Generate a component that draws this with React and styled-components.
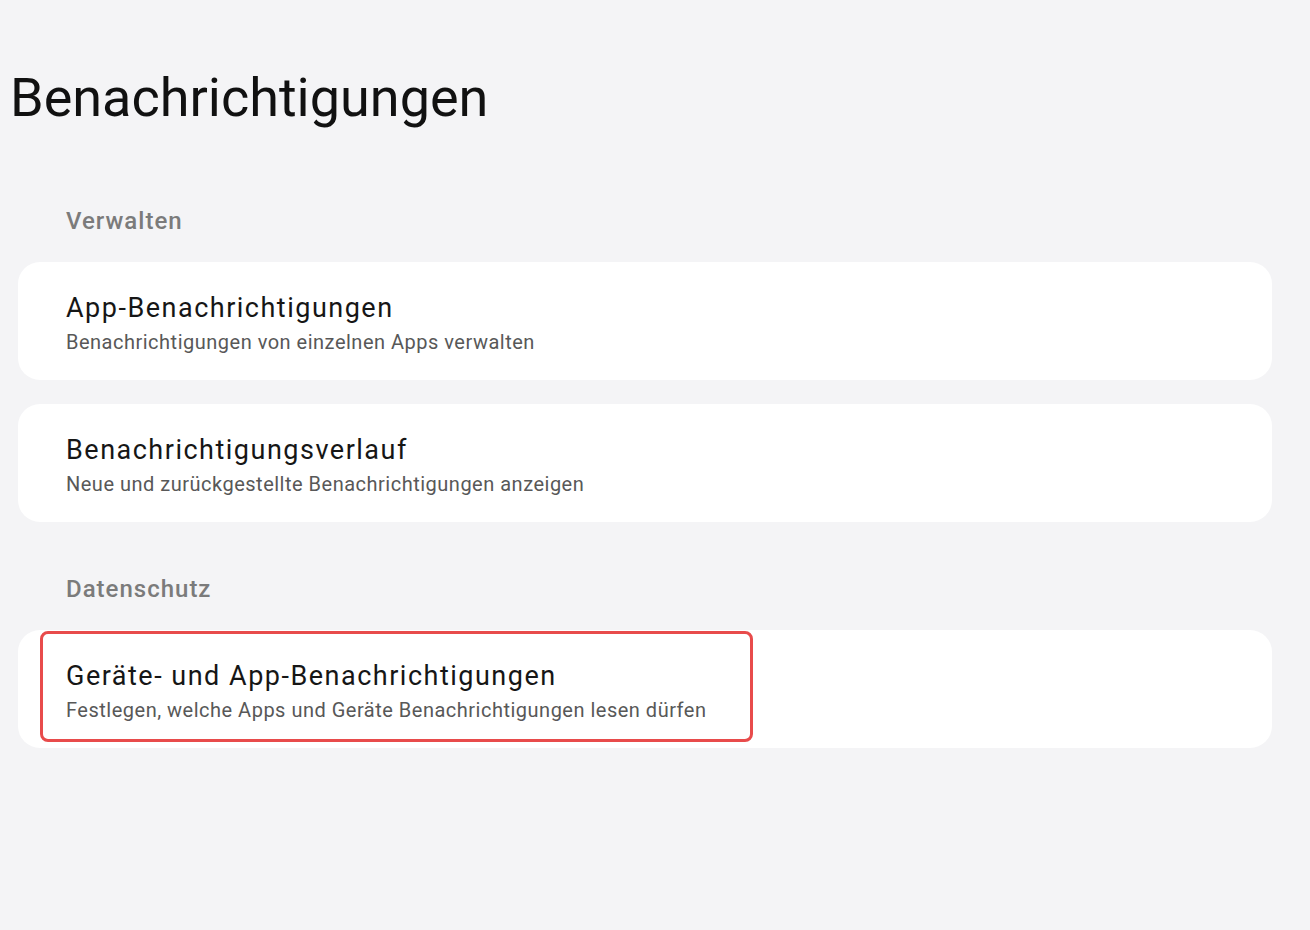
import React from "react"
import styled, { createGlobalStyle } from "styled-components"

const GlobalStyle = createGlobalStyle`
  html, body {
    margin: 0;
    padding: 0;
    background: #f4f4f6;
  }
  body {
    font-family: Roboto, "Noto Sans", "Liberation Sans", sans-serif;
    color: #111;
  }
`

const Page = styled.div`
  width: 1310px;
  height: 930px;
  background: #f4f4f6;
  padding: 66px 38px 0 18px;
  box-sizing: border-box;
`

const Title = styled.h1`
  margin: 0 0 0 -8px;
  font-size: 54px;
  font-weight: 400;
  line-height: 64px;
  color: #111;
`

const SectionHeader = styled.div`
  margin: ${({ first }) => (first ? "77px" : "53px")} 0 27px 48px;
  font-size: 24px;
  font-weight: 500;
  letter-spacing: 1px;
  line-height: 28px;
  color: #7b7b7b;
`

const List = styled.div`
  display: flex;
  flex-direction: column;
  gap: 24px;
`

const Card = styled.div`
  position: relative;
  height: 118px;
  box-sizing: border-box;
  padding: 30px 48px 0;
  background: #fff;
  border-radius: 22px;
  display: flex;
  flex-direction: column;
`

const ItemTitle = styled.div`
  font-size: 27px;
  letter-spacing: 1.5px;
  line-height: 32px;
  color: #161616;
`

const ItemSub = styled.div`
  margin-top: 6px;
  font-size: 20px;
  letter-spacing: 0.5px;
  line-height: 24px;
  color: #585858;
`

const Highlight = styled.div`
  position: absolute;
  left: 22px;
  top: 1px;
  width: 713px;
  height: 111px;
  box-sizing: border-box;
  border: 3px solid #e84b4b;
  border-radius: 8px;
  pointer-events: none;
`

function Item({ title, sub, highlighted }) {
  return (
    <Card>
      <ItemTitle>{title}</ItemTitle>
      <ItemSub>{sub}</ItemSub>
      {highlighted && <Highlight />}
    </Card>
  )
}

export default function App() {
  return (
    <Page>
      <GlobalStyle />
      <Title>Benachrichtigungen</Title>
      <SectionHeader first>Verwalten</SectionHeader>
      <List>
        <Item
          title="App-Benachrichtigungen"
          sub="Benachrichtigungen von einzelnen Apps verwalten"
        />
        <Item
          title="Benachrichtigungsverlauf"
          sub="Neue und zurückgestellte Benachrichtigungen anzeigen"
        />
      </List>
      <SectionHeader>Datenschutz</SectionHeader>
      <List>
        <Item
          title="Geräte- und App-Benachrichtigungen"
          sub="Festlegen, welche Apps und Geräte Benachrichtigungen lesen dürfen"
          highlighted
        />
      </List>
    </Page>
  )
}
